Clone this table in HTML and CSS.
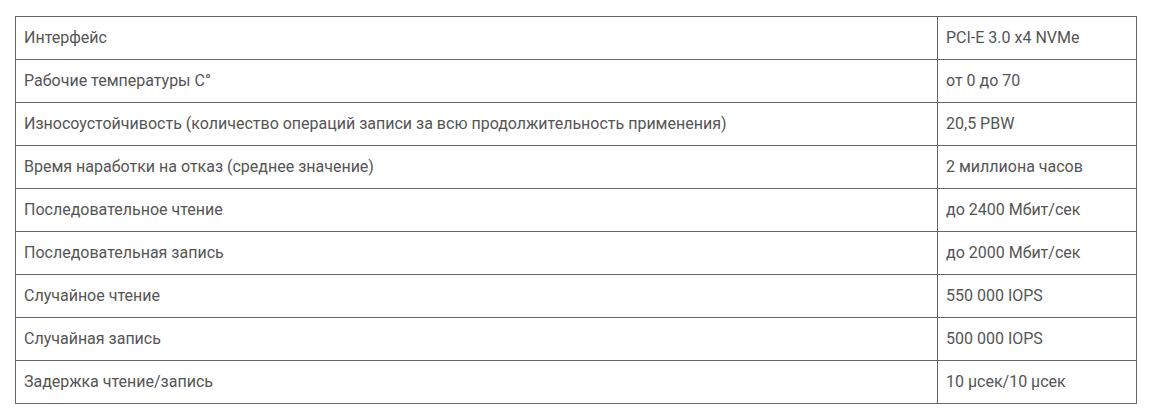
FILE: index.html
```html
<!DOCTYPE html>
<html lang="ru">
<head>
<meta charset="utf-8">
<link rel="stylesheet" href="styles.css">
</head>
<body>
<table class="specs">
<tbody>
<tr><td class="name">Интерфейс</td><td class="value">PCI-E 3.0 x4 NVMe</td></tr>
<tr><td class="name">Рабочие температуры С°</td><td class="value">от 0 до 70</td></tr>
<tr><td class="name">Износоустойчивость (количество операций записи за всю продолжительность применения)</td><td class="value">20,5 PBW</td></tr>
<tr><td class="name">Время наработки на отказ (среднее значение)</td><td class="value">2 миллиона часов</td></tr>
<tr><td class="name">Последовательное чтение</td><td class="value">до 2400 Мбит/сек</td></tr>
<tr><td class="name">Последовательная запись</td><td class="value">до 2000 Мбит/сек</td></tr>
<tr><td class="name">Случайное чтение</td><td class="value">550 000 IOPS</td></tr>
<tr><td class="name">Случайная запись</td><td class="value">500 000 IOPS</td></tr>
<tr><td class="name">Задержка чтение/запись</td><td class="value">10 µсек/10 µсек</td></tr>
</tbody>
</table>
</body>
</html>
```
FILE: styles.css
```css
html, body {
  margin: 0;
  padding: 0;
  background: #fff;
}
body {
  padding: 16px 15px;
  font-family: Roboto, "Noto Sans", sans-serif;
  font-size: 16px;
  color: #555;
}
.specs {
  width: 1122px;
  border-collapse: collapse;
}
.specs td {
  border: 1px solid #666;
  padding: 12px 8px;
  line-height: 18px;
  text-align: left;
  vertical-align: middle;
}
.specs .value {
  width: 182px;
}
```
